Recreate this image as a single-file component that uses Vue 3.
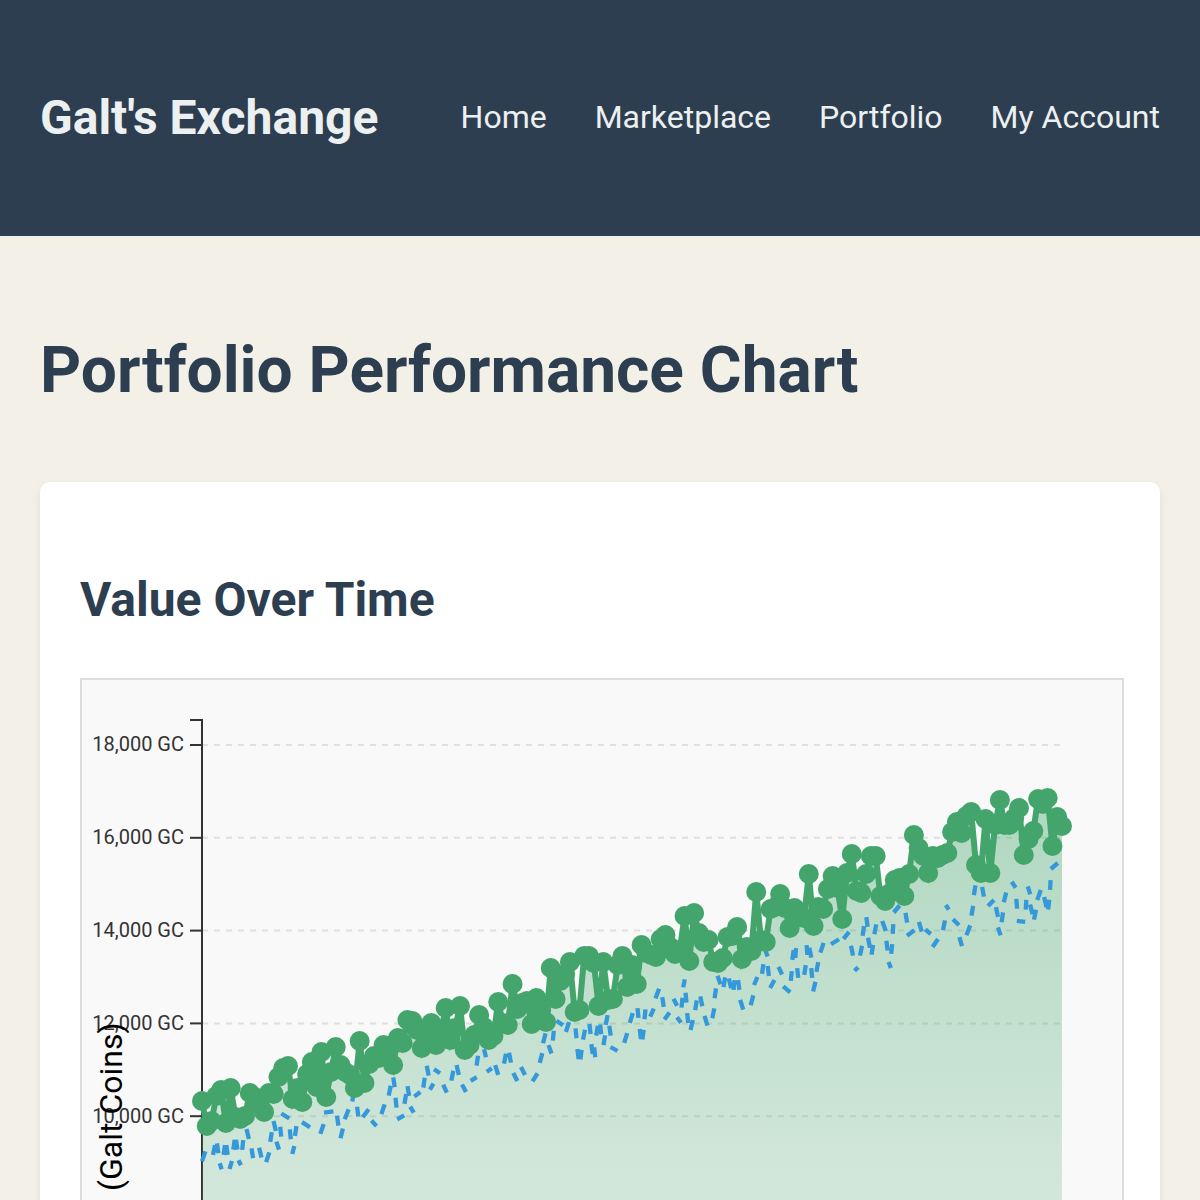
<template>
  <div class="page">
    <header class="header">
      <h2 class="brand">Galt's Exchange</h2>
      <nav class="nav">
        <a v-for="item in links" :key="item" class="link">{{ item }}</a>
      </nav>
    </header>

    <main class="main">
      <h1 class="title">Portfolio Performance Chart</h1>
      <section class="card">
        <h2 class="card-title">Value Over Time</h2>
        <div class="chart">
          <svg width="1040" height="900" viewBox="82 680 1040 900">
            <defs>
              <linearGradient id="fill" x1="0" y1="798" x2="0" y2="1578" gradientUnits="userSpaceOnUse">
                <stop offset="0" stop-color="#43a56b" stop-opacity="0.4" />
                <stop offset="1" stop-color="#43a56b" stop-opacity="0.03" />
              </linearGradient>
            </defs>

            <!-- grid and y axis -->
            <g v-for="t in ticks" :key="t.label">
              <line class="grid" x1="202" x2="1062" :y1="t.y" :y2="t.y" />
              <line class="axis" x1="190" x2="202" :y1="t.y" :y2="t.y" />
              <text class="tick" x="184" :y="t.y + 6.4">{{ t.label }}</text>
            </g>
            <path class="axis" d="M190 720H202V1580" />
            <text class="axis-label" transform="translate(122 1022.4) rotate(-90)">Portfolio Value (Galt Coins)</text>

            <!-- portfolio and benchmark -->
            <path :d="area" fill="url(#fill)" />
            <path class="benchmark" :d="benchmark" />
            <path class="line" :d="line" />
            <circle v-for="(p, i) in points" :key="i" class="dot" :cx="p.x" :cy="p.y" r="10" />
          </svg>
        </div>
      </section>
    </main>
  </div>
</template>

<script setup>
import { computed } from 'vue'

const links = ['Home', 'Marketplace', 'Portfolio', 'My Account']

const ticks = [18, 16, 14, 12, 10].map((n, i) => ({
  label: `${n},000 GC`,
  y: 745 + i * 92.8
}))

// one value per day
const values = [
  1101, 1126, 1121, 1096, 1090, 1123, 1088, 1117, 1119, 1116,
  1093, 1097, 1104, 1112, 1093, 1094, 1077, 1068, 1066, 1099,
  1088, 1102, 1074, 1062, 1087, 1052, 1097, 1072, 1047, 1065,
  1072, 1075, 1088, 1041, 1083, 1064, 1056, 1058, 1045, 1052,
  1065, 1038, 1043, 1020, 1021, 1030, 1048, 1032, 1023, 1045,
  1032, 1008, 1040, 1028, 1006, 1050, 1045, 1035, 1015, 1027,
  1040, 1036, 1002, 1023, 1025, 984, 1009, 1003, 1001, 1024,
  998, 1010, 1022, 968, 999, 981, 974, 962, 1012, 1010,
  956, 956, 963, 1006, 962, 1000, 999, 965, 956, 987,
  965, 984, 945, 953, 955, 957, 939, 935, 947, 954,
  950, 916, 961, 913, 933, 942, 940, 962, 963, 958,
  937, 936, 927, 959, 947, 951, 892, 940, 942, 909,
  907, 894, 908, 928, 908, 917, 918, 874, 926, 907,
  909, 889, 876, 888, 919, 873, 854, 891, 893, 874,
  856, 856, 896, 901, 893, 880, 878, 896, 874, 835,
  848, 856, 873, 856, 858, 855, 853, 832, 822, 833,
  816, 812, 865, 873, 819, 873, 825, 800, 825, 825,
  818, 808, 855, 839, 831, 799, 804, 798, 846, 817,
  826
]

const points = values.map((y, i) => ({ x: 202 + (i * 860) / 180, y }))
const line = computed(() => 'M' + points.map(p => `${p.x.toFixed(1)} ${p.y}`).join('L'))
const area = computed(() => `${line.value}V1580H202Z`)

// benchmark dashes: centre x, centre y, half width (positive leans right), half height
const dashes = [
  [203.7, 1156.3, 1.7], [214, 1150, 1], [217.7, 1148.3, -0.7], [220.7, 1166.3, -1, 3], [224.3, 1150, 0.7],
  [227, 1150, -0.7], [230.7, 1165, 1.2, 4], [234, 1144.7, 0.7], [236.7, 1144.7, -0.7], [239.7, 1162.7, -1.2, 2.5],
  [242.7, 1145, 0.5], [247.7, 1134, -1.2], [252.3, 1153.3, -0.8], [260.3, 1152.7, -1.2], [267.7, 1157.3, 1.6],
  [271, 1137, 0.8], [274.7, 1126, -1.2], [277.7, 1145.7, -1.3, 4], [285.3, 1116, -4, 2.5], [280.7, 1131.7, -0.5],
  [290.3, 1134.3, -0.5], [293.3, 1150, 1, 4], [295.7, 1131, 0.7], [306, 1124.7, -4, 2.6], [322, 1129, 1.7],
  [328.7, 1112, 4.7, 0.6], [337.7, 1120.7, -0.7], [341.7, 1133.3, 1.2], [346.7, 1114.3, 2], [352.7, 1099, 0.5, 2.5],
  [357.7, 1111.7, -0.6], [365.7, 1113.3, 3, 4], [374, 1123.3, -2.5, 2.8], [383, 1109.3, 1.6], [389.7, 1090.7, 1],
  [394, 1082.3, -0.8], [396, 1102.7, -0.5], [400.7, 1117.3, 3.5, 2], [405.3, 1099, 0.8], [408.3, 1091, -0.8],
  [412, 1109.7, -1.8, 3], [417.3, 1094.3, 3, 2.3], [424, 1082.7, 0.7], [427.7, 1070.7, -1], [431.7, 1086.7, 1.8, 3],
  [437, 1071.3, -3, 2], [445, 1088.7, -1.8, 4], [452.3, 1075.7, 1], [457.7, 1070, -1.2], [464, 1088.3, -2, 3.7],
  [473.7, 1079, 3, 1.8], [477.3, 1060.7, 0.7], [485, 1053.3, -1, 4], [489.3, 1070, 2.5, 1.8], [496.7, 1070, -1.5],
  [505, 1058.7, 1], [510, 1057.7, -1], [515.3, 1077, -2, 4], [523, 1071, -2, 4], [535, 1077.3, 2.5, 4],
  [541, 1058, 1.3], [544.3, 1038.3, 1.3], [550, 1049.3, -1.5, 4.2], [553.3, 1035.7, 0.5], [559.7, 1023, -3.3, 2.3],
  [567.5, 1027, 1.6], [576, 1033.3, -0.5], [578, 1054, -0.6], [581, 1054.7, 0.6], [584, 1034.7, 1],
  [590, 1029, -0.6], [592, 1049, -0.7], [594.7, 1052.3, -0.5], [597, 1030.7, 0.8], [600.7, 1029.3, -0.5],
  [604.3, 1040.3, 0.8], [606.7, 1020, 1], [610, 1030.7, -0.7], [614, 1049, -3.5, 2], [625.7, 1038, 1.5],
  [631.3, 1018, 1.5], [638, 1013, -0.5], [640.3, 1034, -0.6], [643, 1034.7, 0.6], [645, 1014.3, 0.5],
  [652, 1012.7, 1.8, 4], [657.3, 993.7, 1.8], [663, 1002, -0.8], [667, 1016, 2.5, 3.5], [675.3, 1002.3, -1.8, 3.5],
  [679, 1020, -2, 2.8], [682, 1002.7, 0.5], [684, 983.3, 0.8, 4], [686, 997.7, -0.5], [687.7, 1018, -0.5],
  [691.7, 1025, 1.2], [696, 1005.3, 0.8], [701.3, 1001.3, -1], [706, 1020.7, -1.5], [713.3, 1013.3, 1],
  [715.3, 993.3, 0.7], [719, 980, -1.5, 4.2], [724.3, 982.3, 0.8], [730, 983.3, -1.2], [734, 985, 0.5],
  [738.7, 985, -0.7], [741.7, 1004.7, -1.5], [752, 1000.3, 1.3], [755.7, 981, 1.7, 4], [762.7, 969, 0.7],
  [766.7, 954, -1, 2.5], [768.3, 971, -0.6], [772.3, 984, 2.2, 4], [780.3, 970.7, -1.8, 3.8], [786.7, 989.3, -3.5, 3],
  [791.3, 976, 0.5], [793, 955, 0.7], [795.7, 953, 0.4], [797.7, 973, -0.5], [805, 970, 0.8],
  [807, 950, -0.4], [810.3, 952.7, -1], [811.7, 973, -0.5], [814.3, 986.7, 1.2], [817.3, 967, 0.9],
  [822, 947.7, 1.6], [835, 941.7, 4, 2.5], [846.3, 935.3, 2.8, 3.5], [852, 950.7, -1], [856.3, 969, 1.8, 1.8],
  [861, 950.7, 1], [863.3, 931, 0.7], [867, 922, -0.7], [869, 942.7, -1], [872.3, 949.7, 0.8],
  [875.3, 929.3, 1], [884, 926, -1.8], [887, 945.7, -0.6], [889.7, 965, -1.2, 3], [891.7, 949, 0.5],
  [893, 929, 0.3], [896.7, 909, 3, 3.5], [906.3, 917.7, -0.8], [910.7, 933, 3.7, 2.7], [920.3, 926.7, -1.4],
  [928, 931.7, -2.7, 2.3], [935.3, 943, 2.7, 4], [944, 925.3, 1], [947.3, 907.3, -1.5, 2.3], [956, 922.3, -3, 3],
  [960.7, 941.7, -1.3, 4.5], [968.3, 930.3, 1.9], [972.3, 910.7, 0.8], [974.7, 890.3, 0.8], [983, 891.7, -0.9],
  [991, 903, 3, 3], [997, 912, -1], [999.3, 931.3, -1.3, 4], [1002.3, 917.3, 0.7], [1005, 897.3, 1.2],
  [1013.7, 884.7, -2, 3], [1016.7, 903.7, -0.4], [1021, 921.3, -4.2, 0.5], [1029, 890.3, -1.3, 4], [1039, 895, 1.8],
  [1026, 904.7, 0.3], [1031.3, 909.3, -1.2], [1035, 914.7, 1], [1045.3, 902, -1.2], [1048.7, 904.7, 0.6],
  [1050.3, 885, 0.3], [1054.3, 866, 3.5, 3]
]
const benchmark = dashes
  .map(([x, y, w, h = 4.9]) => `M${x - w} ${y + h}l${w * 2} ${-h * 2}`)
  .join('')
</script>

<style>
body {
  margin: 0;
  background: #f3f0e8;
  overflow: hidden;
}
</style>

<style scoped>
.page {
  height: 1200px;
  overflow: hidden;
  font-family: Roboto, sans-serif;
  color: #2c3e50;
}

.header {
  display: flex;
  align-items: center;
  justify-content: space-between;
  box-sizing: border-box;
  height: 236px;
  padding: 0 40px 2px;
  background: #2c3e50;
  color: #ecf0f1;
}

.brand {
  margin: 0;
  font-size: 48px;
  font-weight: 700;
}

.nav {
  display: flex;
  gap: 48px;
  font-size: 32px;
}

.main {
  padding: 93px 40px 0;
}

.title {
  margin: 0;
  font-size: 64px;
  line-height: 84px;
  font-weight: 700;
}

.card {
  margin-top: 69px;
  padding: 80px 40px 40px;
  background: #fff;
  border-radius: 10px;
  box-shadow: 0 4px 8px rgba(0, 0, 0, 0.08);
}

.card-title {
  margin: 0;
  font-size: 48px;
  line-height: 76px;
  font-weight: 700;
}

.chart {
  width: 1040px;
  margin-top: 40px;
  border: 2px solid #ddd;
  background: #f9f9f9;
}

.chart svg {
  display: block;
}

.grid {
  stroke: #e0e0e0;
  stroke-width: 2;
  stroke-dasharray: 6 6;
}

.axis {
  fill: none;
  stroke: #333;
  stroke-width: 2;
}

.tick {
  font-size: 20px;
  text-anchor: end;
  fill: #333;
}

.axis-label {
  font-size: 32px;
  text-anchor: end;
  fill: #000;
}

.line {
  fill: none;
  stroke: #43a56b;
  stroke-width: 6;
}

.dot {
  fill: #43a56b;
}

.benchmark {
  fill: none;
  stroke: #3498db;
  stroke-width: 4.3;
}
</style>
